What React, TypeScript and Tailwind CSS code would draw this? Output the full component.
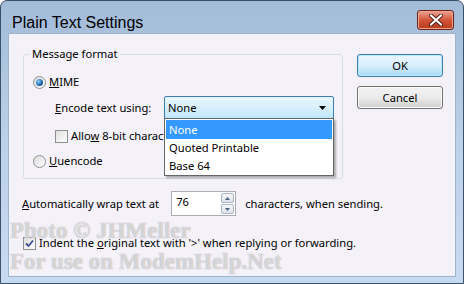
const font = "font-['Noto_Sans',sans-serif] text-[11.2px] leading-[16px] text-black";

const Radio = ({ checked }: { checked?: boolean }) => (
  <span className="relative flex h-[13px] w-[13px] shrink-0 items-center justify-center rounded-full border border-[#8e8f8f] bg-gradient-to-br from-[#dcdcdc] to-[#ffffff]">
    {checked && (
      <span className="h-[7px] w-[7px] rounded-full bg-[radial-gradient(circle_at_35%_35%,#8fd0ff,#1a5fa8_60%,#0e3f78)]" />
    )}
  </span>
);

const Check = ({ checked }: { checked?: boolean }) => (
  <span className="flex h-[13px] w-[13px] shrink-0 items-center justify-center border border-[#8e8f8f] bg-gradient-to-br from-[#dedede] to-[#ffffff]">
    {checked && (
      <svg width="9" height="9" viewBox="0 0 9 9">
        <path d="M1 4.5 L3.5 7 L8 1.5" fill="none" stroke="#3c4f8c" strokeWidth="1.8" />
      </svg>
    )}
  </span>
);

const WinButton = ({ label, primary }: { label: string; primary?: boolean }) => (
  <div
    className={
      "flex h-[23px] w-[86px] items-center justify-center rounded-[3px] border " +
      (primary
        ? "border-[#3c7fb1] bg-gradient-to-b from-[#eaf6fd] via-[#d9f0fc] to-[#a7d9f5] shadow-[inset_0_0_0_1px_#b9e6fb]"
        : "border-[#707070] bg-gradient-to-b from-[#f2f2f2] via-[#ebebeb] to-[#cfcfcf] shadow-[inset_0_0_0_1px_#fcfcfc]")
    }
  >
    {label}
  </div>
);

export default function App() {
  return (
    <div className={"flex h-[284px] w-[464px] flex-col overflow-hidden rounded-t-[7px] border border-[#3b5168] bg-gradient-to-b from-[#a2bbd8] via-[#bcd1ea] to-[#c6daf1] " + font}>
      {/* title bar */}
      <div className="flex h-[32px] shrink-0 items-start justify-between pl-[11px] pr-[9px]">
        <div className="pt-[13px] font-['Liberation_Sans',sans-serif] text-[16px] leading-[18px] text-black">
          Plain Text Settings
        </div>
        <div className="mt-[9px] flex h-[20px] w-[37px] items-center justify-center rounded-[3px] border border-[#6b2417] bg-gradient-to-b from-[#e8a493] via-[#d3553a] to-[#b73a1e] shadow-[inset_0_0_0_1px_#efa48f]">
          <svg width="14" height="12" viewBox="0 0 14 12">
            <path d="M2 1.5 L12 10.5 M12 1.5 L2 10.5" stroke="#4a1d14" strokeWidth="4" strokeLinecap="round" />
            <path d="M2 1.5 L12 10.5 M12 1.5 L2 10.5" stroke="#ffffff" strokeWidth="2.2" strokeLinecap="round" />
          </svg>
        </div>
      </div>

      {/* client area */}
      <div className="relative mx-[7px] mb-[6px] flex-1 border border-[#9db4cf] bg-[#f4f1f8]">
        <div className="flex items-start pl-[14px] pt-[12px]">
          <fieldset className="w-[320px] rounded-[3px] border border-[#d5dfe5] pb-[9px] pl-[9px]">
            <legend className="-ml-[3px] px-[2px]">Message format</legend>
            <div className="mt-[12px] flex h-[16px] items-center gap-[3px]">
              <Radio checked />
              <span>
                <u>M</u>IME
              </span>
            </div>
            <div className="ml-[22px] mt-[6px] flex items-center">
              <span className="w-[109px]">
                <u>E</u>ncode text using:
              </span>
              <div className="relative">
                <div className="flex h-[23px] w-[170px] items-center justify-between rounded-[2px] border border-[#3c7fb1] bg-gradient-to-b from-[#eaf6fd] via-[#d9f0fc] to-[#bee6fd] pl-[3px] pr-[7px]">
                  <span>None</span>
                  <svg width="7" height="4" viewBox="0 0 7 4">
                    <path d="M0 0 H7 L3.5 4 Z" fill="#000" />
                  </svg>
                </div>
                <div className="absolute left-0 top-[22px] z-10 w-[170px] border border-[#646464] bg-white p-[1px] shadow-[2px_2px_2px_rgba(0,0,0,0.3)]">
                  <div className="flex h-[19px] items-center bg-[#3399ff] pl-[3px] text-white">None</div>
                  <div className="flex h-[18px] items-center pl-[3px]">Quoted Printable</div>
                  <div className="flex h-[17px] items-center pl-[3px]">Base 64</div>
                </div>
              </div>
            </div>
            <div className="ml-[22px] mt-[9px] flex h-[16px] items-center gap-[3px]">
              <Check />
              <span>
                Allo<u>w</u> 8-bit characters
              </span>
            </div>
            <div className="mt-[9px] flex h-[16px] items-center gap-[3px]">
              <Radio />
              <span>
                <u>U</u>uencode
              </span>
            </div>
          </fieldset>
          <div className="ml-[14px] mt-[8px] flex flex-col gap-[9px]">
            <WinButton label="OK" primary />
            <WinButton label="Cancel" />
          </div>
        </div>

        <div className="ml-[13px] mt-[12px] flex items-center">
          <span>
            <u>A</u>utomatically wrap text at
          </span>
          <div className="ml-[12px] flex h-[25px] w-[65px] border border-[#abadb3] bg-white">
            <span className="flex-1 pl-[4px] pt-[2px]">76</span>
            <div className="flex w-[14px] flex-col gap-[1px] py-[1px] pr-[1px]">
              <div className="flex flex-1 items-center justify-center rounded-[2px] border border-[#a9b7c9] bg-gradient-to-b from-[#f4f6f9] to-[#dde3ea]">
                <svg width="5" height="3" viewBox="0 0 5 3">
                  <path d="M0 3 H5 L2.5 0 Z" fill="#4d6185" />
                </svg>
              </div>
              <div className="flex flex-1 items-center justify-center rounded-[2px] border border-[#a9b7c9] bg-gradient-to-b from-[#f4f6f9] to-[#dde3ea]">
                <svg width="5" height="3" viewBox="0 0 5 3">
                  <path d="M0 0 H5 L2.5 3 Z" fill="#4d6185" />
                </svg>
              </div>
            </div>
          </div>
          <span className="ml-[9px]">characters, when sending.</span>
        </div>

        <div className="ml-[14px] mt-[19px] flex h-[16px] items-center gap-[3px]">
          <Check checked />
          <span>
            Indent the <u>o</u>riginal text with '&gt;' when replying or forwarding.
          </span>
        </div>

        {/* watermark */}
        <div className="pointer-events-none absolute left-[1px] top-[181px] font-['Liberation_Serif',serif] text-[23px] font-bold leading-[31px] text-white/60 [text-shadow:0_0_1px_rgba(110,110,110,0.7)]">
          <div>Photo © JHMeller</div>
          <div>For use on ModemHelp.Net</div>
        </div>
      </div>
    </div>
  );
}
